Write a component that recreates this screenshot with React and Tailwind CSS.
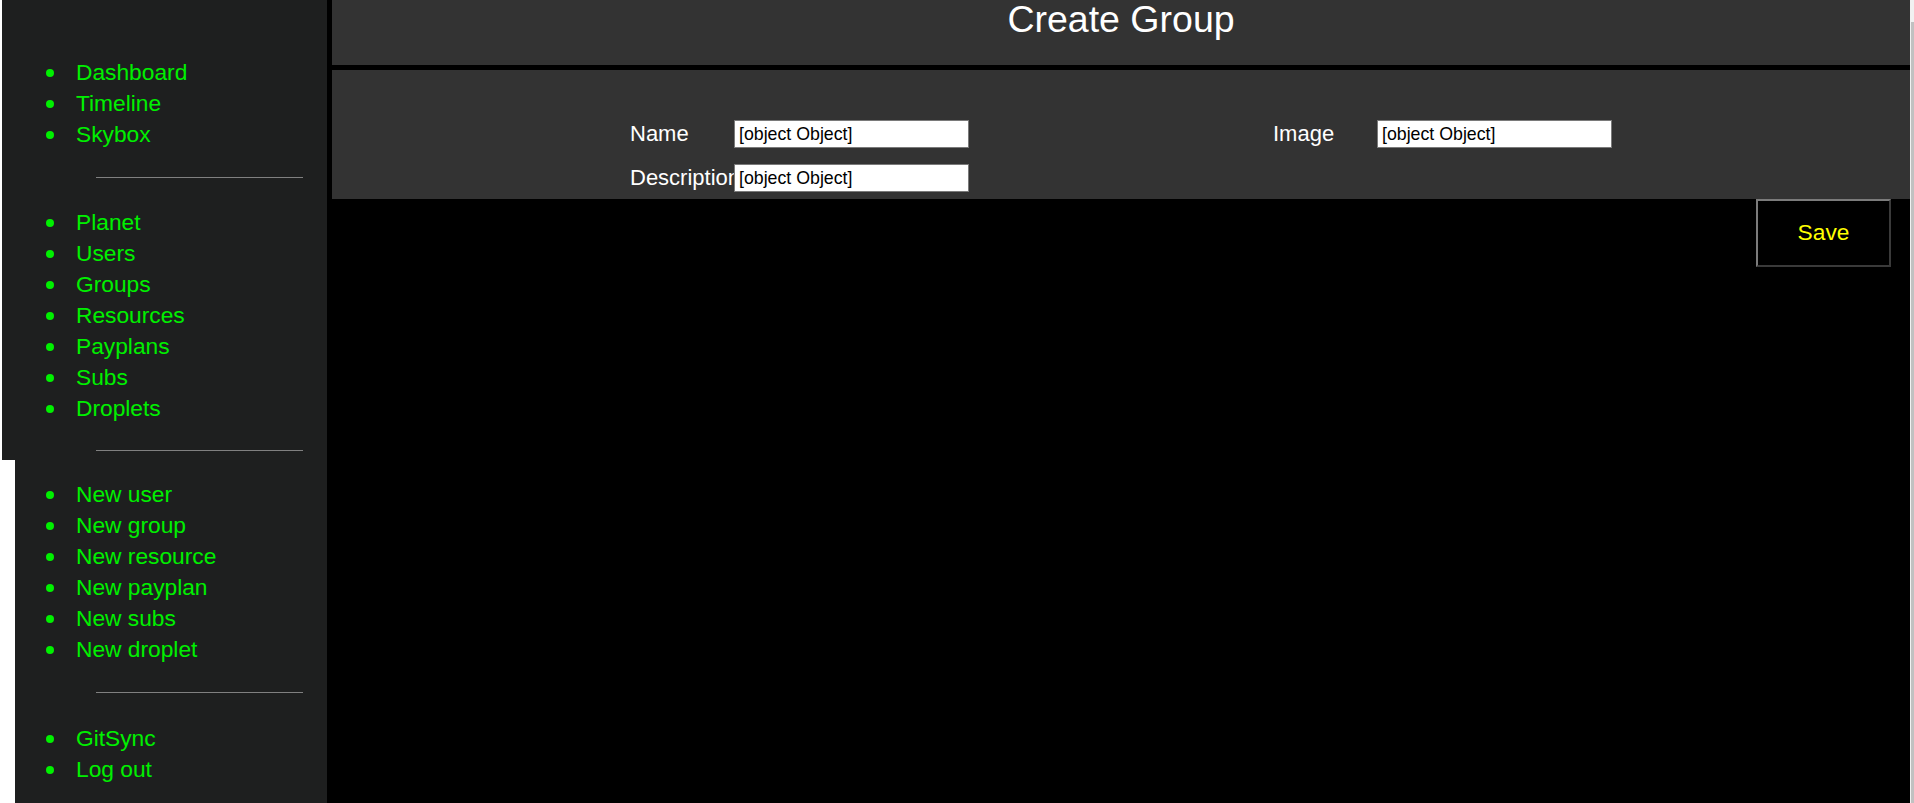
import React from "react";

const group1 = ["Dashboard", "Timeline", "Skybox"];
const group2 = ["Planet", "Users", "Groups", "Resources", "Payplans", "Subs", "Droplets"];
const group3 = ["New user", "New group", "New resource", "New payplan", "New subs", "New droplet"];
const group4 = ["GitSync", "Log out"];

function NavList({ items, className }) {
  return (
    <ul className={className}>
      {items.map((item) => (
        <li key={item} className="flex h-[31px] items-center">
          <span className="mr-[22px] h-[8px] w-[8px] shrink-0 rounded-full bg-[#00f000]" />
          <a href="#" className="whitespace-nowrap text-[22.75px] leading-[31px] text-[#00f000]">
            {item}
          </a>
        </li>
      ))}
    </ul>
  );
}

function Field({ label }) {
  return (
    <div className="flex h-[28px] items-center">
      <label className="w-[104px] shrink-0 whitespace-nowrap text-[22px] leading-[26px] text-white">
        {label}
      </label>
      <input
        type="text"
        defaultValue="[object Object]"
        className="h-[28px] w-[235px] shrink-0 border border-[#7a7a7a] bg-white pl-[4px] text-[17.75px] leading-[20px] text-black outline-none"
      />
    </div>
  );
}

export default function App() {
  return (
    <div className="flex h-[803px] w-[1914px] overflow-hidden bg-white font-['Liberation_Sans',Arial,sans-serif]">
      <aside className="flex w-[327px] shrink-0 flex-col">
        <div className="ml-[2px] h-[460px] bg-[#1e1f1f] pt-[57px]">
          <NavList items={group1} className="pl-[44px]" />
          <hr className="ml-[94px] mt-[27px] w-[207px] border-0 border-t border-[#808080]" />
          <NavList items={group2} className="mt-[29px] pl-[44px]" />
          <hr className="ml-[94px] mt-[26px] w-[207px] border-0 border-t border-[#808080]" />
        </div>
        <div className="ml-[15px] flex-1 bg-[#1e1f1f] pt-[19px]">
          <NavList items={group3} className="pl-[31px]" />
          <hr className="ml-[81px] mt-[27px] w-[207px] border-0 border-t border-[#808080]" />
          <NavList items={group4} className="mt-[30px] pl-[31px]" />
        </div>
      </aside>

      <main className="flex flex-1 flex-col bg-black pl-[5px]">
        <header className="h-[65px] bg-[#333333] pt-[1px] text-center">
          <h1 className="text-[37.5px] leading-[36px] font-normal text-white">Create Group</h1>
        </header>
        <section className="mt-[5px] h-[129px] bg-[#333333] pt-[50px]">
          <form className="mx-auto flex w-[982px] justify-between">
            <div className="flex flex-col gap-[16px]">
              <Field label="Name" />
              <Field label="Description" />
            </div>
            <div className="flex flex-col gap-[16px]">
              <Field label="Image" />
            </div>
          </form>
        </section>
        <div className="flex justify-end pr-[19px]">
          <button
            type="button"
            className="h-[68px] w-[135px] border-2 border-t-[#7b7b7b] border-l-[#7b7b7b] border-b-[#3a3a3a] border-r-[#3a3a3a] bg-black pb-[2px] text-[22.75px] leading-[26px] text-[#ffff00]"
          >
            Save
          </button>
        </div>
      </main>

      <div className="w-[4px] shrink-0 bg-[#f1f1f1] pl-[1px] pt-[22px]">
        <div className="h-full bg-[#c1c1c1]" />
      </div>
    </div>
  );
}
